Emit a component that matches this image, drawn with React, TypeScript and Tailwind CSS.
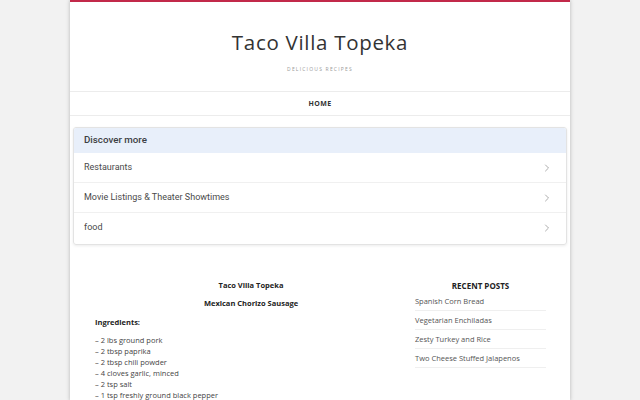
import React from "react";
import { ChevronRight } from "lucide-react";

const discover = ["Restaurants", "Movie Listings & Theater Showtimes", "food"];

const ingredients = [
  "– 2 lbs ground pork",
  "– 2 tbsp paprika",
  "– 2 tbsp chili powder",
  "– 4 cloves garlic, minced",
  "– 2 tsp salt",
  "– 1 tsp freshly ground black pepper",
];

const recentPosts = [
  "Spanish Corn Bread",
  "Vegetarian Enchiladas",
  "Zesty Turkey and Rice",
  "Two Cheese Stuffed Jalapenos",
];

export default function App() {
  return (
    <div className="min-h-screen bg-[#f2f2f2] font-['Open_Sans',sans-serif]">
      <div className="mx-auto w-[500px] min-h-screen bg-white border-t-2 border-[#c2294a] shadow-[0_0_4px_rgba(0,0,0,0.25)]">
        {/* Site header */}
        <header className="flex flex-col items-center pt-[26px] h-[90px] border-b border-[#ececec]">
          <h1 className="text-[20.5px] leading-[28px] tracking-[0.7px] text-[#333] font-normal">
            Taco Villa Topeka
          </h1>
          <p className="mt-[9px] text-[5px] leading-[8px] tracking-[1.2px] text-[#9a9a9a] uppercase">
            Delicious Recipes
          </p>
        </header>

        {/* Nav */}
        <nav className="flex justify-center items-center pt-[2px] h-[24px] border-b border-[#ececec]">
          <span className="text-[7px] font-bold tracking-[0.4px] text-[#333]">HOME</span>
        </nav>

        {/* Discover more */}
        <div className="mx-[3px] mt-[11px] rounded-[3px] border border-[#e3e3e3] shadow-[0_1px_3px_rgba(0,0,0,0.08)] font-['Roboto',sans-serif] overflow-hidden pb-[1px]">
          <div className="h-[25px] bg-[#e8effa] flex items-center px-[10px]">
            <span className="text-[9.75px] font-medium text-[#3c4043]">Discover more</span>
          </div>
          {discover.map((d, i) => (
            <div
              key={d}
              className={`h-[30px] flex items-center justify-between pl-[10px] pr-[13px] ${
                i < discover.length - 1 ? "border-b border-[#f0f0f0]" : ""
              }`}
            >
              <span className="text-[9px] text-[#4a4a4a]">{d}</span>
              <ChevronRight size={12} strokeWidth={1.4} color="#8a8a8a" />
            </div>
          ))}
        </div>

        {/* Content */}
        <div className="flex pl-[25px] pr-[24px] pt-[35px] gap-[8px]">
          <main className="w-[312px] text-[7.5px] leading-[11px] text-[#444]">
            <p className="text-center font-bold text-[#222] mb-[7px]">Taco Villa Topeka</p>
            <p className="text-center font-bold text-[#222] mb-[8px]">Mexican Chorizo Sausage</p>
            <p className="font-bold text-[#222] mb-[7px]">Ingredients:</p>
            <div>
              {ingredients.map((l) => (
                <p key={l}>{l}</p>
              ))}
            </div>
          </main>
          <aside className="w-[131px]">
            <h2 className="text-center text-[8px] leading-[11px] font-bold text-[#222] mb-[1px]">
              RECENT POSTS
            </h2>
            <ul>
              {recentPosts.map((p) => (
                <li
                  key={p}
                  className="pt-[4px] pb-[3px] text-[7.5px] leading-[11px] text-[#555] border-b border-[#efefef]"
                >
                  {p}
                </li>
              ))}
            </ul>
          </aside>
        </div>
      </div>
    </div>
  );
}
